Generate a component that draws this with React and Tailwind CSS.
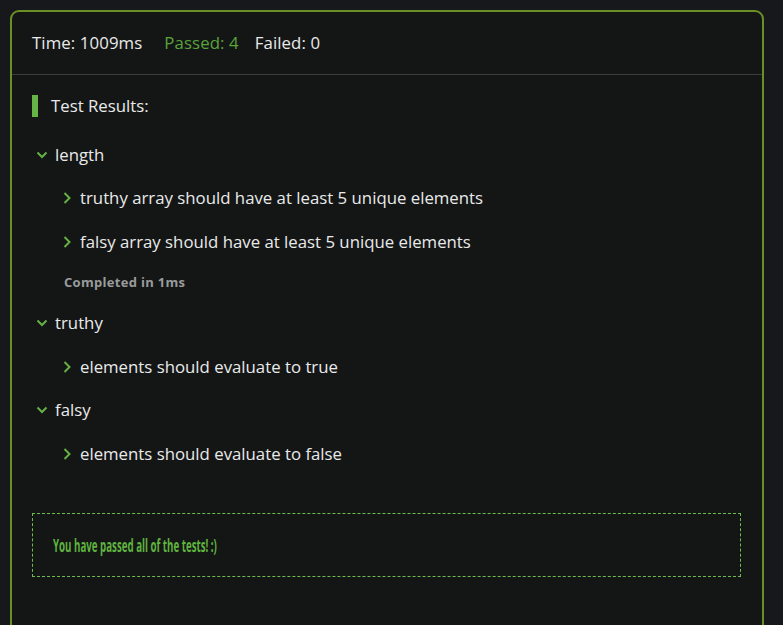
import React from 'react';

// Collapsed / expanded chevrons drawn inline
const ChevronDown = () => (
    <svg width="12" height="8" viewBox="0 0 12 8" className="shrink-0">
        <path d="M1.5 1.5 L6 6 L10.5 1.5" fill="none" stroke="#66b044" strokeWidth="2" />
    </svg>
);

const ChevronRight = () => (
    <svg width="8" height="12" viewBox="0 0 8 12" className="shrink-0">
        <path d="M1.5 1 L6.5 6 L1.5 11" fill="none" stroke="#66b044" strokeWidth="2" />
    </svg>
);

const Suite = ({ name, className = '' }) => (
    <div className={`flex items-center h-[22px] pl-[4px] ${className}`}>
        <ChevronDown />
        <span className="ml-[7px] text-[16.8px] text-[#e9eaea]">{name}</span>
    </div>
);

const Spec = ({ title, className = '' }) => (
    <div className={`flex items-center h-[22px] pl-[31px] ${className}`}>
        <ChevronRight />
        <span className="ml-[9px] text-[16.8px] text-[#e9eaea]">{title}</span>
    </div>
);

export default function App() {
    return (
        <div
            className="min-h-screen bg-[#17181c] pt-[10px] pl-[10px] pr-[19px] overflow-hidden"
            style={{ fontFamily: '"Open Sans", "Noto Sans", sans-serif' }}
        >
            <div className="h-[640px] bg-[#141616] border-2 border-[#6a8f24] rounded-[9px]">
                {/* Header */}
                <div className="flex items-center h-[63px] px-[20px] border-b border-[#3b3c3c] text-[16.8px] tracking-[0.1px]">
                    <span className="text-[#e9eaea]">Time: 1009ms</span>
                    <span className="ml-[22px] text-[#5aa33b]">Passed: 4</span>
                    <span className="ml-[16px] text-[#e9eaea]">Failed: 0</span>
                </div>

                {/* Results */}
                <div className="px-[20px]">
                    <div className="flex items-center h-[22px] mt-[20px]">
                        <div className="w-[6px] h-[22px] bg-[#67b346]" />
                        <span className="ml-[13px] text-[16.8px] text-[#e9eaea]">Test Results:</span>
                    </div>

                    <Suite name="length" className="mt-[27px]" />
                    <Spec title="truthy array should have at least 5 unique elements" className="mt-[21px]" />
                    <Spec title="falsy array should have at least 5 unique elements" className="mt-[22px]" />
                    <div className="flex items-center h-[22px] mt-[19px] pl-[32px]">
                        <span className="text-[13px] font-bold text-[#9a9b9b] tracking-[0.3px]">Completed in 1ms</span>
                    </div>

                    <Suite name="truthy" className="mt-[18px]" />
                    <Spec title="elements should evaluate to true" className="mt-[22px]" />

                    <Suite name="falsy" className="mt-[21px]" />
                    <Spec title="elements should evaluate to false" className="mt-[22px]" />

                    <div className="mt-[48px] mr-[1px] h-[64px] flex items-center px-[20px] border border-dashed border-[#6cbd4a]">
                        <span className="inline-block origin-left scale-x-[0.54] whitespace-nowrap text-[18px] font-bold text-[#5fb33f]">You have passed all of the tests! :)</span>
                    </div>
                </div>
            </div>
        </div>
    );
}
